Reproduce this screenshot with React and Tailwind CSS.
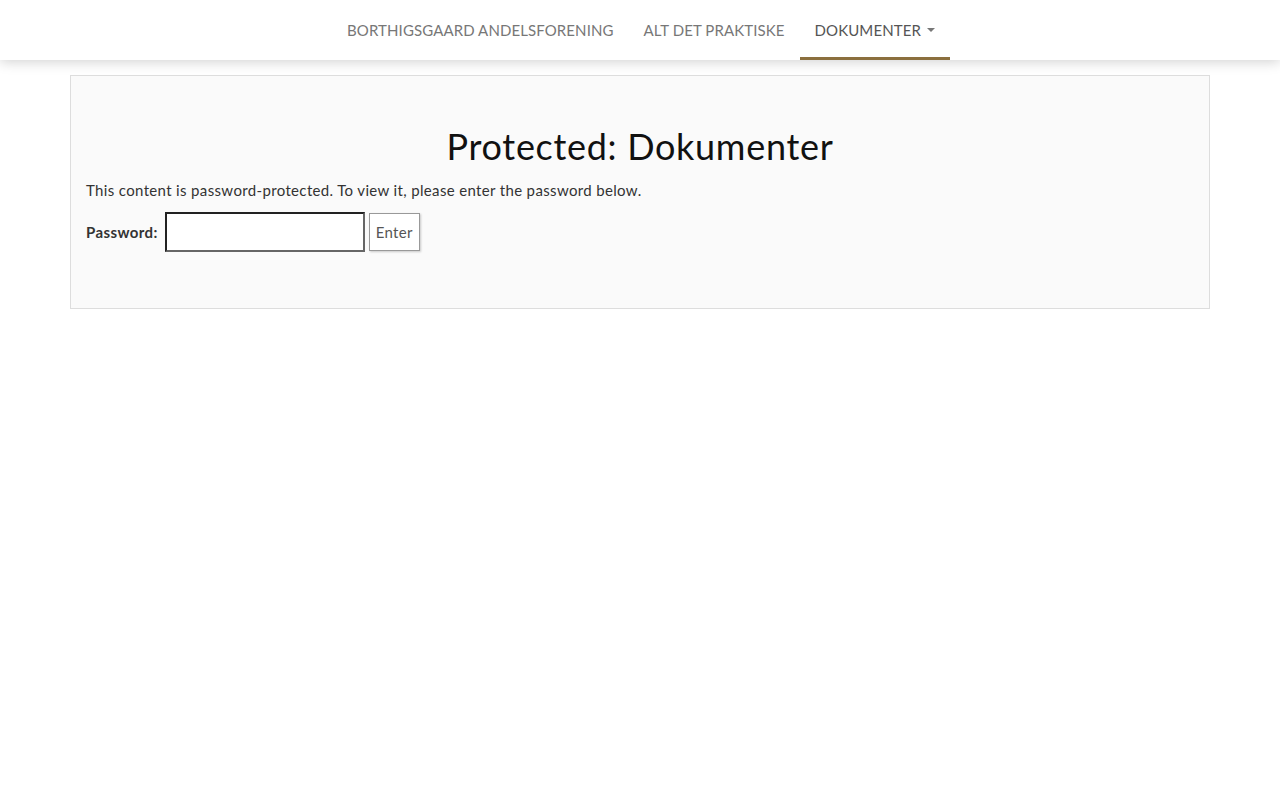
import React from 'react';

const navItems = [
    { label: 'BORTHIGSGAARD ANDELSFORENING' },
    { label: 'ALT DET PRAKTISKE' },
    { label: 'DOKUMENTER', active: true, caret: true },
];

export default function App() {
    return (
        <div className="min-h-[800px] bg-white text-[#333] font-['Lato','Open_Sans',sans-serif]">
            <nav className="h-[60px] bg-white shadow-[0_2px_12px_rgba(0,0,0,0.18)] relative z-10 flex justify-center">
                <ul className="flex pl-[2px]">
                    {navItems.map((item) => (
                        <li key={item.label}>
                            <a
                                href="#"
                                className={`flex items-center h-[60px] px-[15px] text-[15px] tracking-[0.1px] ${item.active ? 'text-[#555] border-b-[3px] border-[#8b6f3e] pt-[3px]' : 'text-[#777]'}`}
                            >
                                {item.label}
                                {item.caret && (
                                    <span className="ml-[6px] inline-block w-0 h-0 border-t-[4px] border-t-[#777] border-x-[4px] border-x-transparent" />
                                )}
                            </a>
                        </li>
                    ))}
                </ul>
            </nav>

            <div className="px-[70px] pt-[15px]">
                <article className="bg-[#fafafa] border border-[#ddd] px-[15px] pt-[50px] pb-[56px]">
                    <h1 className="text-center text-[36px] leading-[40px] tracking-[0.7px] text-[#111] mb-[13px]">Protected: Dokumenter</h1>
                    <p className="text-[15px] leading-[22px] tracking-[0.35px] mb-[11px]">This content is password-protected. To view it, please enter the password below.</p>
                    <form className="flex items-center" onSubmit={(e) => e.preventDefault()}>
                        <label className="text-[15px] font-bold tracking-[0.4px] mr-[7px]">Password:</label>
                        <input type="password" className="w-[200px] h-[40px] bg-white border-2 border-[#222] border-r-[#666] border-b-[#666] outline-none" />
                        <button className="ml-[4px] h-[38px] px-[6px] bg-white border border-[#999] shadow-[1px_1px_2px_rgba(0,0,0,0.2)] text-[15px] tracking-[0.3px] text-[#555]">Enter</button>
                    </form>
                </article>
            </div>
        </div>
    );
}
